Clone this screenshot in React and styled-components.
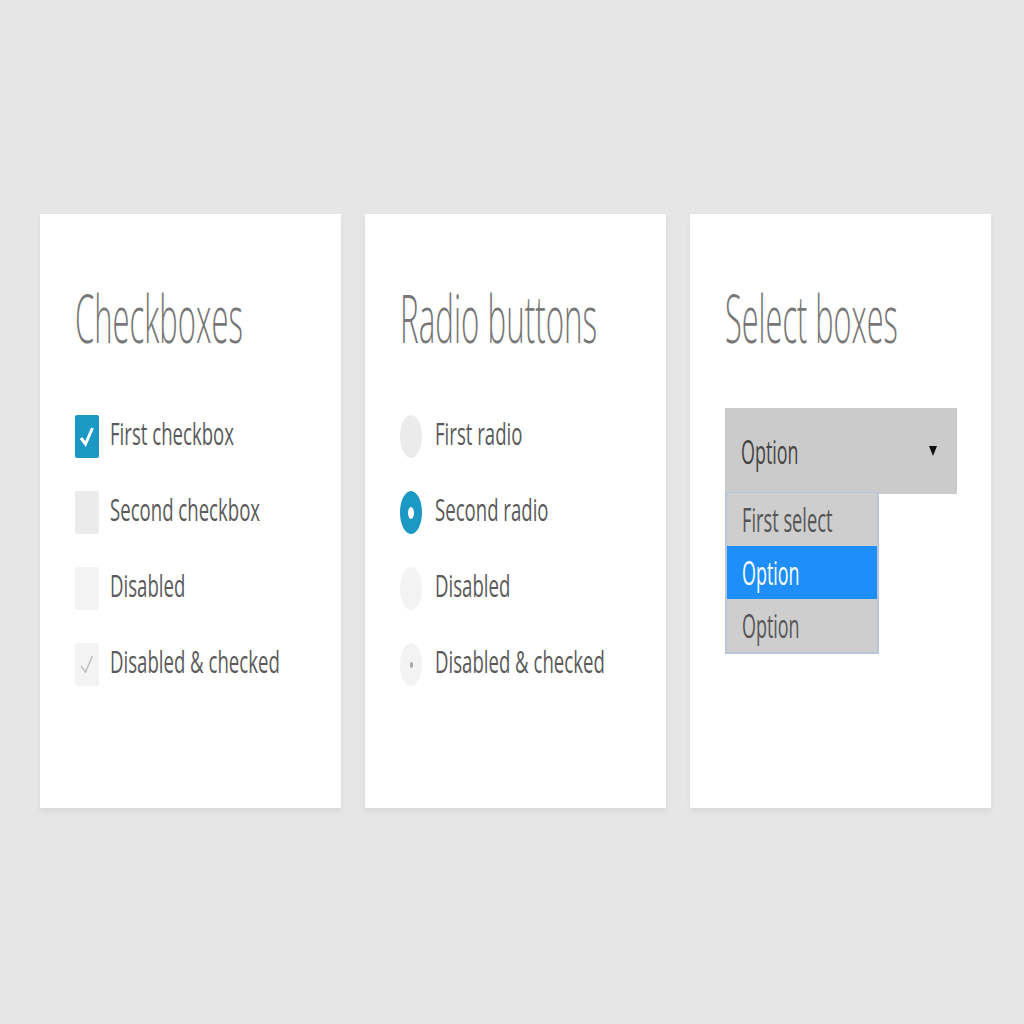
import React from "react";
import styled, { createGlobalStyle } from "styled-components";

const blue = "#1b98c4";

const GlobalStyle = createGlobalStyle`
  body {
    margin: 0;
    background: #e6e6e6;
    font-family: "Open Sans", "Liberation Sans", sans-serif;
  }
`;

const Page = styled.div`
  display: flex;
  gap: 24px;
  padding: 214px 0 0 40px;
  min-height: 1024px;
  box-sizing: border-box;
`;

const Card = styled.div`
  width: 301px;
  height: 594px;
  background: #fff;
  box-sizing: border-box;
  padding: 70px 34px 0 35px;
  overflow: hidden;
  box-shadow: 0 4px 6px rgba(0, 0, 0, 0.06);
`;

// the whole shot is squeezed horizontally, so text is drawn narrow
const Narrow = styled.span`
  display: inline-block;
  white-space: nowrap;
  transform: scaleX(${(p) => p.$sx || 0.6});
  transform-origin: left center;
`;

const Title = styled.h2`
  margin: 0 0 65px;
  font-size: 66px;
  line-height: 1;
  font-weight: 300;
  color: #777;
`;

const List = styled.div`
  display: flex;
  flex-direction: column;
  gap: 33px;
`;

const Row = styled.div`
  display: flex;
  align-items: center;
  height: 43px;
`;

const Label = styled.div`
  font-size: 31px;
  line-height: 43px;
  color: #5a5a5a;
  margin-left: ${(p) => p.$gap}px;
  margin-top: -6px;
`;

const Box = styled.div`
  width: 24px;
  height: 43px;
  flex: none;
  border-radius: 2px;
  background: ${(p) => (p.$on && !p.$disabled ? blue : p.$disabled ? "#f3f3f3" : "#ebebeb")};
  svg {
    display: block;
  }
`;

const Round = styled.div`
  width: 22px;
  height: 43px;
  flex: none;
  border-radius: 50%;
  background: ${(p) => (p.$on && !p.$disabled ? blue : p.$disabled ? "#f3f3f3" : "#ebebeb")};
  display: flex;
  align-items: center;
  justify-content: center;
`;

const Dot = styled.div`
  width: ${(p) => (p.$disabled ? 3 : 6)}px;
  height: ${(p) => (p.$disabled ? 6 : 12)}px;
  border-radius: 50%;
  background: ${(p) => (p.$disabled ? "#a8a8a8" : "#fff")};
`;

const Check = ({ color, width }) => (
  <svg width="24" height="43" viewBox="0 0 24 43">
    <path d="M6 23 L10.5 29 L17.5 13" fill="none" stroke={color} strokeWidth={width} />
  </svg>
);

const Checkbox = ({ on, disabled, children }) => (
  <Row>
    <Box $on={on} $disabled={disabled}>
      {on && <Check color={disabled ? "#bdbdbd" : "#fff"} width={disabled ? 1.5 : 3} />}
    </Box>
    <Label $gap={11}>
      <Narrow>{children}</Narrow>
    </Label>
  </Row>
);

const Radio = ({ on, disabled, children }) => (
  <Row>
    <Round $on={on} $disabled={disabled}>
      {on && <Dot $disabled={disabled} />}
    </Round>
    <Label $gap={13}>
      <Narrow>{children}</Narrow>
    </Label>
  </Row>
);

const SelectWrap = styled.div`
  display: flex;
  flex-direction: column;
  margin-top: -7px;
`;

const SelectBox = styled.div`
  height: 86px;
  background: #cbcbcb;
  display: flex;
  align-items: center;
  justify-content: space-between;
  padding: 0 20px 0 16px;
  font-size: 32px;
  color: #444;
`;

const Arrow = styled.div`
  width: 0;
  height: 0;
  border-left: 4px solid transparent;
  border-right: 4px solid transparent;
  border-top: 10px solid #111;
`;

const Options = styled.div`
  width: 154px;
  box-sizing: border-box;
  border: 2px solid #b9c6da;
  border-top-width: 1px;
  margin-top: -2px;
`;

const Option = styled.div`
  height: 53px;
  display: flex;
  align-items: center;
  padding-left: 15px;
  font-size: 32px;
  background: ${(p) => (p.$active ? "#1e8ffa" : "#cecece")};
  color: ${(p) => (p.$active ? "#fff" : "#555")};
`;

export default function App() {
  return (
    <>
      <GlobalStyle />
      <Page>
        <Card>
          <Title>
            <Narrow $sx={0.47}>Checkboxes</Narrow>
          </Title>
          <List>
            <Checkbox on>First checkbox</Checkbox>
            <Checkbox>Second checkbox</Checkbox>
            <Checkbox disabled>Disabled</Checkbox>
            <Checkbox on disabled>Disabled &amp; checked</Checkbox>
          </List>
        </Card>
        <Card>
          <Title>
            <Narrow $sx={0.475}>Radio buttons</Narrow>
          </Title>
          <List>
            <Radio>First radio</Radio>
            <Radio on>Second radio</Radio>
            <Radio disabled>Disabled</Radio>
            <Radio on disabled>Disabled &amp; checked</Radio>
          </List>
        </Card>
        <Card>
          <Title>
            <Narrow $sx={0.465}>Select boxes</Narrow>
          </Title>
          <SelectWrap>
            <SelectBox>
              <Narrow $sx={0.56}>Option</Narrow>
              <Arrow />
            </SelectBox>
            <Options>
              <Option>
                <Narrow $sx={0.57}>First select</Narrow>
              </Option>
              <Option $active>
                <Narrow $sx={0.56}>Option</Narrow>
              </Option>
              <Option>
                <Narrow $sx={0.56}>Option</Narrow>
              </Option>
            </Options>
          </SelectWrap>
        </Card>
      </Page>
    </>
  );
}
